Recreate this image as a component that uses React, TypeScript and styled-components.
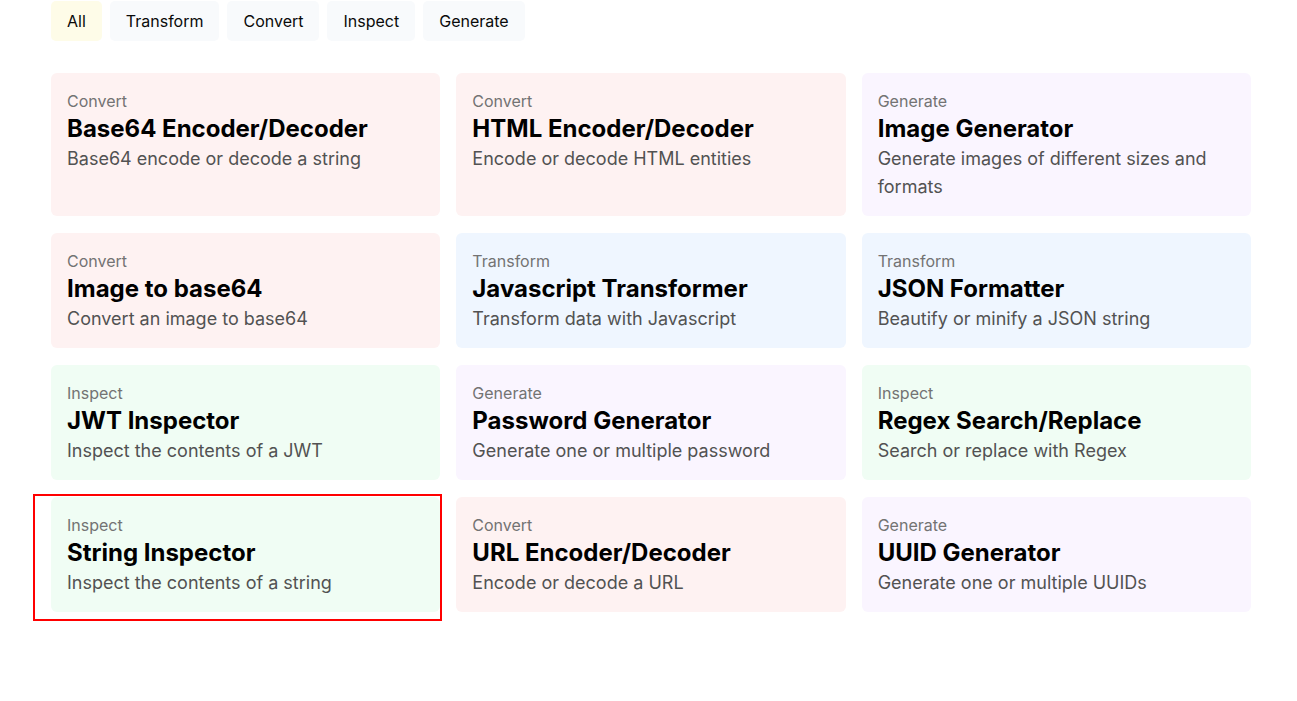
import React from "react";
import styled, { createGlobalStyle } from "styled-components";

const GlobalStyle = createGlobalStyle`
    html, body {
        margin: 0;
        padding: 0;
        background: #ffffff;
        font-family: Inter, "Noto Sans", "Liberation Sans", sans-serif;
    }
`;

type Category = "Transform" | "Convert" | "Inspect" | "Generate";

const cardColors: Record<Category, string> = {
    Convert: "#fef2f2",
    Transform: "#eff6ff",
    Inspect: "#f0fdf4",
    Generate: "#faf5ff",
};

const Page = styled.div`
    width: 1200px;
    min-height: 100vh;
    padding: 1px 0 0 51px;
`;

const FilterBar = styled.div`
    display: flex;
    gap: 8px;
    margin-bottom: 32px;
`;

const FilterButton = styled.button<{ $active?: boolean }>`
    height: 40px;
    padding: 0 16px;
    border: none;
    border-radius: 5px;
    background-color: ${(props) => (props.$active ? "#fefce8" : "#f8fafc")};
    color: #0a0a0a;
    font-family: inherit;
    font-size: 16px;
    cursor: pointer;
`;

const Grid = styled.div`
    display: grid;
    grid-template-columns: repeat(3, 1fr);
    column-gap: 16px;
    row-gap: 17px;
`;

const Card = styled.a<{ $category: Category }>`
    position: relative;
    display: flex;
    flex-direction: column;
    padding: 16px 16px 15px;
    border-radius: 6px;
    background-color: ${(props) => cardColors[props.$category]};
    text-decoration: none;
`;

const CategoryLabel = styled.span`
    font-size: 16px;
    line-height: 24px;
    color: #737373;
`;

const Title = styled.span`
    font-size: 24px;
    line-height: 32px;
    font-weight: 700;
    color: #000000;
`;

const Description = styled.span`
    font-size: 18px;
    line-height: 28px;
    color: #525252;
`;

const Highlight = styled.div`
    position: absolute;
    left: -18px;
    top: -3px;
    box-sizing: border-box;
    width: 409px;
    height: 127px;
    border: 2px solid #ff0000;
    pointer-events: none;
    z-index: 2;
`;

interface Tool {
    category: Category;
    title: string;
    description: string;
    highlighted?: boolean;
}

const tools: Tool[] = [
    { category: "Convert", title: "Base64 Encoder/Decoder", description: "Base64 encode or decode a string" },
    { category: "Convert", title: "HTML Encoder/Decoder", description: "Encode or decode HTML entities" },
    { category: "Generate", title: "Image Generator", description: "Generate images of different sizes and formats" },
    { category: "Convert", title: "Image to base64", description: "Convert an image to base64" },
    { category: "Transform", title: "Javascript Transformer", description: "Transform data with Javascript" },
    { category: "Transform", title: "JSON Formatter", description: "Beautify or minify a JSON string" },
    { category: "Inspect", title: "JWT Inspector", description: "Inspect the contents of a JWT" },
    { category: "Generate", title: "Password Generator", description: "Generate one or multiple password" },
    { category: "Inspect", title: "Regex Search/Replace", description: "Search or replace with Regex" },
    { category: "Inspect", title: "String Inspector", description: "Inspect the contents of a string", highlighted: true },
    { category: "Convert", title: "URL Encoder/Decoder", description: "Encode or decode a URL" },
    { category: "Generate", title: "UUID Generator", description: "Generate one or multiple UUIDs" },
];

const filters = ["All", "Transform", "Convert", "Inspect", "Generate"];

const App = () => {
    const [filter, setFilter] = React.useState("All");

    const visible = tools.filter((tool) => filter === "All" || tool.category === filter);

    return (
        <>
            <GlobalStyle />
            <Page>
                <FilterBar>
                    {filters.map((name) => (
                        <FilterButton key={name} $active={filter === name} onClick={() => setFilter(name)}>
                            {name}
                        </FilterButton>
                    ))}
                </FilterBar>
                <Grid>
                    {visible.map((tool) => (
                        <Card key={tool.title} $category={tool.category} href="#">
                            <CategoryLabel>{tool.category}</CategoryLabel>
                            <Title>{tool.title}</Title>
                            <Description>{tool.description}</Description>
                            {tool.highlighted && <Highlight />}
                        </Card>
                    ))}
                </Grid>
            </Page>
        </>
    );
};

export default App;
